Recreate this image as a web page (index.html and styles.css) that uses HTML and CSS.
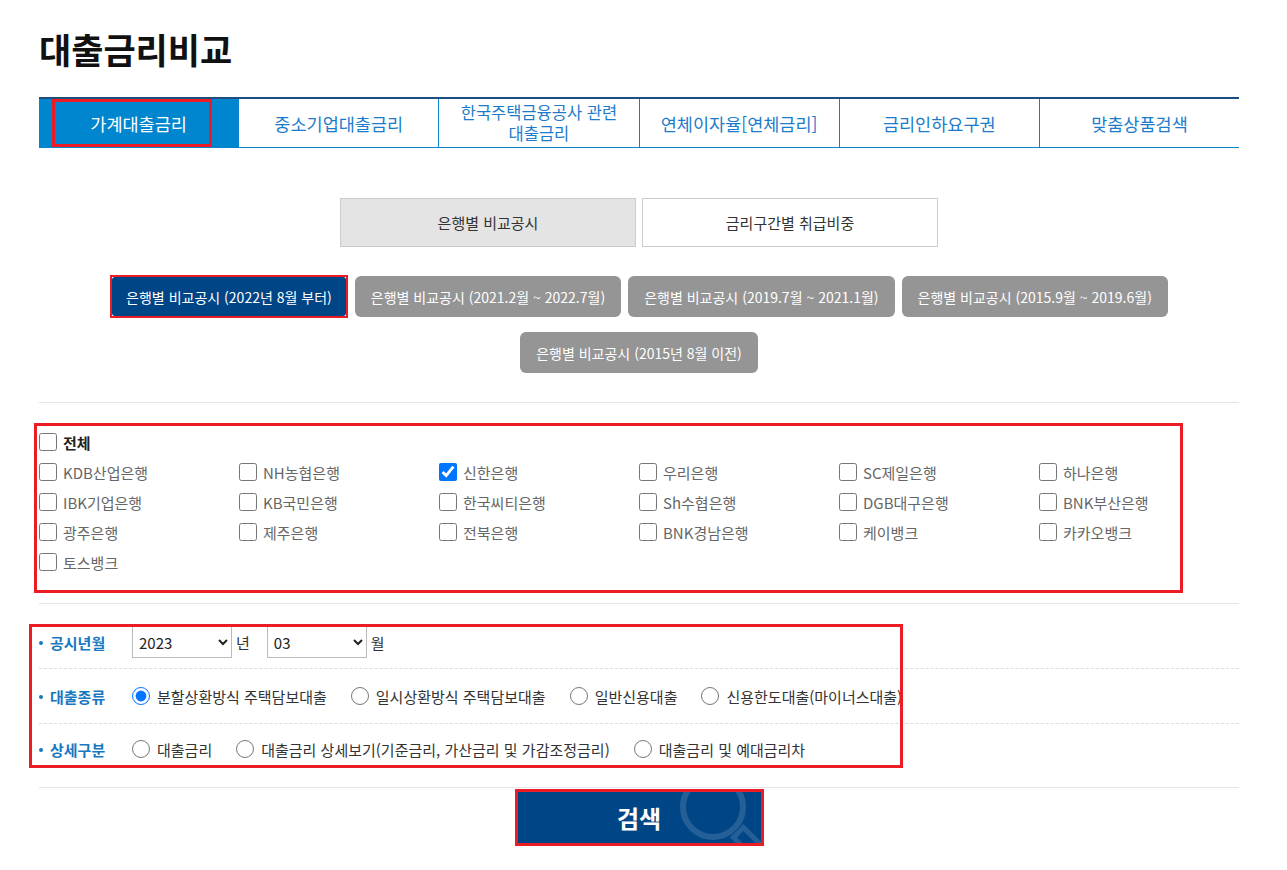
FILE: index.html
```html
<!DOCTYPE html>
<html lang="ko">
<head>
    <meta charset="UTF-8">
    <meta name="viewport" content="width=device-width, initial-scale=1.0">
    <title>대출금리비교</title>
    <link rel="stylesheet" href="styles.css">
</head>
<body>
<div class="wrap">

    <h1>대출금리비교</h1>

    <ul class="tabs">
        <li class="on"><a href="#">가계대출금리</a><span class="mark"></span></li>
        <li><a href="#">중소기업대출금리</a></li>
        <li><a href="#" class="two">한국주택금융공사 관련<br>대출금리</a></li>
        <li><a href="#">연체이자율[연체금리]</a></li>
        <li><a href="#">금리인하요구권</a></li>
        <li><a href="#">맞춤상품검색</a></li>
    </ul>

    <div class="sub-tabs">
        <a href="#" class="on">은행별 비교공시</a>
        <a href="#">금리구간별 취급비중</a>
    </div>

    <div class="period-btns">
        <span class="mark-btn"><button class="btn on">은행별 비교공시 (2022년 8월 부터)</button></span>
        <button class="btn">은행별 비교공시 (2021.2월 ~ 2022.7월)</button>
        <button class="btn">은행별 비교공시 (2019.7월 ~ 2021.1월)</button>
        <button class="btn">은행별 비교공시 (2015.9월 ~ 2019.6월)</button>
        <button class="btn">은행별 비교공시 (2015년 8월 이전)</button>
    </div>

    <div class="bank-section">
        <div class="bank-box">
            <label class="chk all"><input type="checkbox"> 전체</label>
            <label class="chk"><input type="checkbox"> KDB산업은행</label>
            <label class="chk"><input type="checkbox"> NH농협은행</label>
            <label class="chk"><input type="checkbox" checked> 신한은행</label>
            <label class="chk"><input type="checkbox"> 우리은행</label>
            <label class="chk"><input type="checkbox"> SC제일은행</label>
            <label class="chk"><input type="checkbox"> 하나은행</label>
            <label class="chk"><input type="checkbox"> IBK기업은행</label>
            <label class="chk"><input type="checkbox"> KB국민은행</label>
            <label class="chk"><input type="checkbox"> 한국씨티은행</label>
            <label class="chk"><input type="checkbox"> Sh수협은행</label>
            <label class="chk"><input type="checkbox"> DGB대구은행</label>
            <label class="chk"><input type="checkbox"> BNK부산은행</label>
            <label class="chk"><input type="checkbox"> 광주은행</label>
            <label class="chk"><input type="checkbox"> 제주은행</label>
            <label class="chk"><input type="checkbox"> 전북은행</label>
            <label class="chk"><input type="checkbox"> BNK경남은행</label>
            <label class="chk"><input type="checkbox"> 케이뱅크</label>
            <label class="chk"><input type="checkbox"> 카카오뱅크</label>
            <label class="chk"><input type="checkbox"> 토스뱅크</label>
        </div>
    </div>

    <div class="search-form">
        <div class="row first">
            <span class="tit">공시년월</span>
            <select class="sel"><option>2023</option></select>
            <span class="unit">년</span>
            <select class="sel"><option>03</option></select>
            <span class="unit">월</span>
        </div>
        <div class="row">
            <span class="tit">대출종류</span>
            <div class="radios">
                <label class="rdo"><input type="radio" name="kind" checked> 분할상환방식 주택담보대출</label>
                <label class="rdo"><input type="radio" name="kind"> 일시상환방식 주택담보대출</label>
                <label class="rdo"><input type="radio" name="kind"> 일반신용대출</label>
                <label class="rdo"><input type="radio" name="kind"> 신용한도대출(마이너스대출)</label>
            </div>
        </div>
        <div class="row last">
            <span class="tit">상세구분</span>
            <div class="radios">
                <label class="rdo"><input type="radio" name="detail"> 대출금리</label>
                <label class="rdo"><input type="radio" name="detail"> 대출금리 상세보기(기준금리, 가산금리 및 가감조정금리)</label>
                <label class="rdo"><input type="radio" name="detail"> 대출금리 및 예대금리차</label>
            </div>
        </div>
        <span class="mark-form"></span>
    </div>

    <div class="search-area">
        <button class="search-btn">검색
            <svg class="glass" viewBox="0 0 243 51">
                <circle cx="195" cy="15" r="30" fill="none" stroke="rgba(255,255,255,0.14)" stroke-width="6"/>
                <g transform="translate(195 15) rotate(-45)">
                    <rect x="-7" y="36" width="14" height="30" fill="none" stroke="rgba(255,255,255,0.14)" stroke-width="5"/>
                </g>
            </svg>
        </button>
    </div>

</div>
</body>
</html>
```

FILE: styles.css
```css
body {
    margin: 0;
    background: #fff;
    color: #333;
    font-family: "Noto Sans CJK KR", "Noto Sans", sans-serif;
}
.wrap {
    width: 1200px;
    margin-left: 39px;
}
h1 {
    margin: 0;
    padding-top: 24px;
    font-size: 35px;
    line-height: 50px;
    font-weight: 700;
    color: #111;
}

/* top tabs */
.tabs {
    list-style: none;
    margin: 23px 0 0;
    padding: 0;
    display: flex;
    border-top: 2px solid #1d4e80;
    border-bottom: 1px solid #0b83cb;
}
.tabs li {
    flex: 1;
    height: 48px;
    display: flex;
    align-items: center;
    justify-content: center;
    border-left: 1px solid #0b83cb;
    position: relative;
    text-align: center;
}
.tabs li:first-child {
    border-left: none;
}
.tabs a {
    color: #1c7ccb;
    font-size: 17.5px;
    text-decoration: none;
    line-height: 21px;
}
.tabs a.two {
    display: block;
    font-size: 16.5px;
    line-height: 21px;
}
.tabs li.on {
    background: #0086cf;
}
.tabs li.on a {
    color: #fff;
}
.tabs .mark {
    position: absolute;
    left: 13px;
    top: 0;
    width: 160px;
    height: 48px;
    box-sizing: border-box;
    border: 3px solid #ec1c24;
}

/* sub tabs */
.sub-tabs {
    display: flex;
    justify-content: center;
    gap: 6px;
    margin-top: 50px;
}
.sub-tabs a {
    width: 296px;
    height: 49px;
    box-sizing: border-box;
    border: 1px solid #ccc;
    display: flex;
    align-items: center;
    justify-content: center;
    font-size: 15px;
    color: #333;
    text-decoration: none;
}
.sub-tabs a.on {
    background: #e4e4e4;
}

/* period buttons */
.period-btns {
    display: flex;
    flex-wrap: wrap;
    justify-content: center;
    align-items: center;
    gap: 14px 7px;
    margin-top: 28px;
    padding-bottom: 29px;
    border-bottom: 1px solid #e5e5e5;
}
.btn {
    height: 41px;
    padding: 0 16px;
    border: none;
    border-radius: 6px;
    background: #959595;
    color: #fff;
    font-family: "Noto Sans CJK KR", sans-serif;
    font-size: 14px;
    cursor: pointer;
}
.mark-btn {
    display: flex;
    border: 2px solid #ec1c24;
}
.mark-btn .btn {
    height: 39px;
    border-radius: 3px;
    background: #004686;
    padding: 0 14px;
}

/* bank checkboxes */
.bank-section {
    border-bottom: 1px solid #e5e5e5;
    padding: 20px 0 10px;
}
.bank-box {
    margin-left: -5px;
    width: 1141px;
    border: 3px solid #ec1c24;
    padding: 1px 0 13px 2px;
    display: grid;
    grid-template-columns: repeat(6, 200px);
    grid-auto-rows: 30px;
}
.chk {
    display: flex;
    align-items: center;
    gap: 6px;
    font-size: 15px;
    color: #666;
    white-space: nowrap;
}
.chk.all {
    grid-column: 1 / -1;
    font-weight: 700;
    color: #222;
}
.chk input,
.rdo input {
    width: 18px;
    height: 18px;
    margin: 0;
}

/* search form */
.search-form {
    position: relative;
    border-bottom: 1px solid #e5e5e5;
}
.row {
    display: flex;
    align-items: center;
    padding: 12px 0;
    min-height: 30px;
    border-bottom: 1px dashed #ddd;
}
.row.first {
    padding: 22px 0 10px;
    min-height: 32px;
}
.row.last {
    padding: 10px 0 23px;
    border-bottom: none;
}
.tit {
    width: 82px;
    padding-left: 11px;
    position: relative;
    color: #1678c2;
    font-weight: 700;
    font-size: 15px;
}
.tit::before {
    content: "";
    position: absolute;
    left: 0;
    top: 50%;
    width: 4px;
    height: 4px;
    margin-top: -1px;
    border-radius: 50%;
    background: #1678c2;
}
.sel {
    width: 100px;
    height: 32px;
    border: 1px solid #bbb;
    border-radius: 0;
    background: #fff;
    font-family: "Noto Sans CJK KR", sans-serif;
    font-size: 15px;
    color: #222;
    padding: 0 2px;
}
.unit {
    font-size: 15px;
    color: #333;
    margin: 0 17px 0 4px;
}
.radios {
    display: flex;
    gap: 24px;
}
.rdo {
    display: inline-flex;
    align-items: center;
    gap: 7px;
    font-size: 15px;
    color: #333;
    white-space: nowrap;
}
.mark-form {
    position: absolute;
    left: -10px;
    top: 20px;
    width: 874px;
    height: 144px;
    box-sizing: border-box;
    border: 3px solid #ec1c24;
    pointer-events: none;
}

/* search button */
.search-area {
    display: flex;
    justify-content: center;
    padding-top: 1px;
}
.search-btn {
    position: relative;
    overflow: hidden;
    width: 249px;
    height: 57px;
    border: 3px solid #ec1c24;
    background: #004686;
    color: #fff;
    font-family: "Noto Sans CJK KR", sans-serif;
    font-size: 24px;
    font-weight: 700;
    cursor: pointer;
}
.glass {
    position: absolute;
    left: 0;
    top: 0;
    width: 100%;
    height: 100%;
}
```
